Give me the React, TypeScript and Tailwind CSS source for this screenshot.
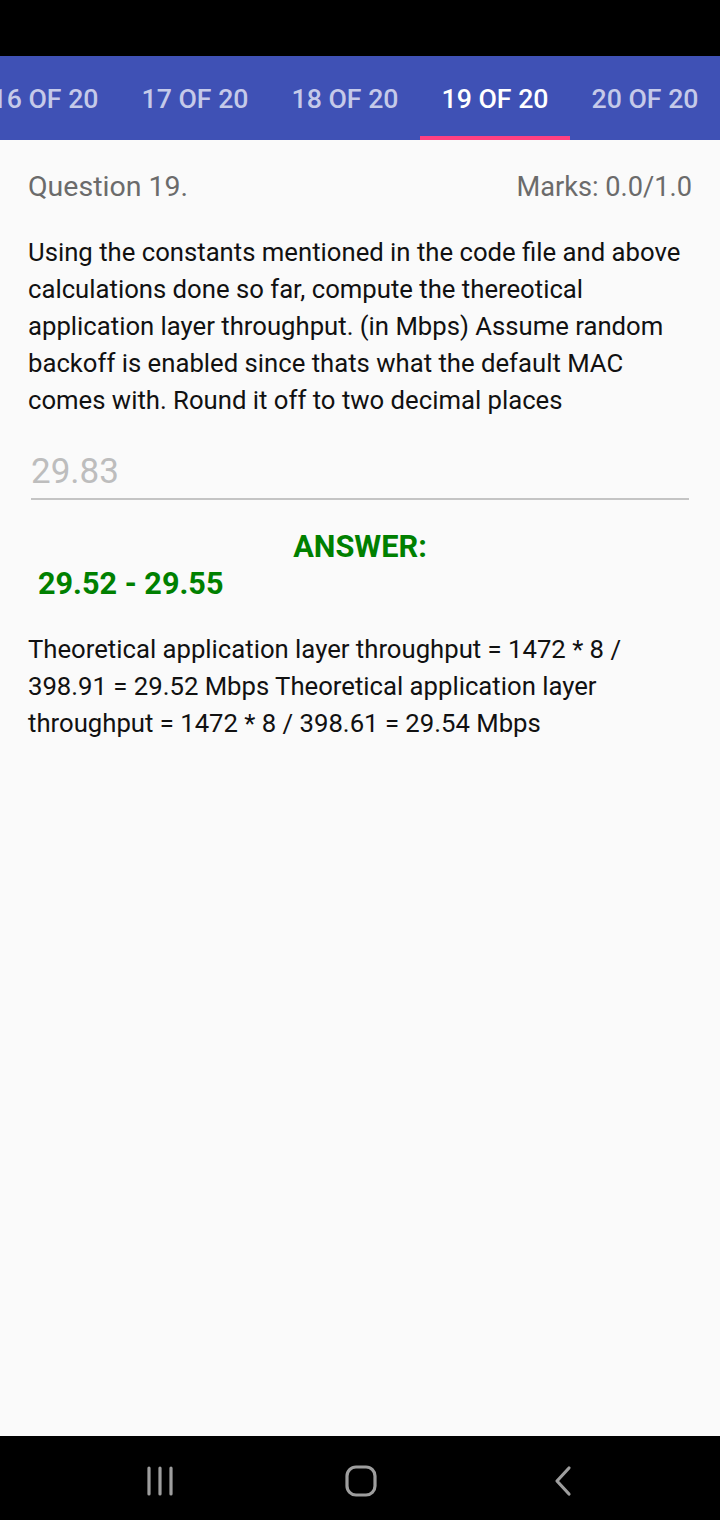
import React from "react";

const tabs = ["16 OF 20", "17 OF 20", "18 OF 20", "19 OF 20", "20 OF 20"];

export default function App() {
  return (
    <div className="w-[720px] h-[1520px] flex flex-col bg-[#fafafa] overflow-hidden" style={{ fontFamily: "Roboto, 'Noto Sans', sans-serif" }}>
      <div className="h-[56px] bg-black shrink-0" />
      <div className="h-[84px] bg-[#3f51b5] shrink-0 flex overflow-hidden">
        <div className="flex ml-[-30px]">
          {tabs.map((t, i) => (
            <div key={t} className="w-[150px] shrink-0 flex flex-col">
              <div className={`flex-1 flex items-center justify-center pt-[6px] text-[26.7px] font-medium ${i === 3 ? "text-white" : "text-[#c5cae9]"}`}>
                {t}
              </div>
              <div className={`h-[4px] ${i === 3 ? "bg-[#ff4081]" : ""}`} />
            </div>
          ))}
        </div>
      </div>
      <div className="flex-1 px-[28px]">
        <div className="flex justify-between items-center pt-[28px] text-[#6b6b6b] leading-[38px]">
          <span className="text-[28.5px]">Question 19.</span>
          <span className="text-[27.2px]">Marks: 0.0/1.0</span>
        </div>
        <p className="mt-[28px] text-[25.7px] leading-[37px] text-[#111]">
          Using the constants mentioned in the code file and above calculations done so far, compute the thereotical application layer throughput. (in Mbps) Assume random backoff is enabled since thats what the default MAC comes with. Round it off to two decimal places
        </p>
        <div className="mx-[3px] mt-[32px] border-b-2 border-[#c4c4c4] pb-[5px] text-[35px] leading-[42px] text-[#bdbdbd]">
          29.83
        </div>
        <div className="mt-[28px] text-center text-[30.7px] font-bold text-[#008000] leading-[38px]">ANSWER:</div>
        <div className="pl-[10px] text-[30.6px] font-bold text-[#008000] leading-[36px]">29.52 - 29.55</div>
        <p className="mt-[29px] text-[25.7px] leading-[37px] text-[#111]">
          Theoretical application layer throughput = 1472 * 8 / 398.91 = 29.52 Mbps Theoretical application layer throughput = 1472 * 8 / 398.61 = 29.54 Mbps
        </p>
      </div>
      <div className="h-[84px] bg-black shrink-0 flex items-center justify-around px-[60px] pt-[6px]">
        <div className="w-[200px] flex justify-center">
          <svg width="30" height="32" viewBox="0 0 30 32">
            <g stroke="#9e9e9e" strokeWidth="3.2" strokeLinecap="round">
              <line x1="4" y1="3" x2="4" y2="29" />
              <line x1="15" y1="3" x2="15" y2="29" />
              <line x1="26" y1="3" x2="26" y2="29" />
            </g>
          </svg>
        </div>
        <div className="w-[200px] flex justify-center pl-[2px]">
          <svg width="32" height="32" viewBox="0 0 32 32">
            <rect x="2" y="2" width="28" height="28" rx="9" fill="none" stroke="#9e9e9e" strokeWidth="3.2" />
          </svg>
        </div>
        <div className="w-[200px] flex justify-center pl-[6px]">
          <svg width="20" height="32" viewBox="0 0 20 32">
            <polyline points="16,3 4,16 16,29" fill="none" stroke="#9e9e9e" strokeWidth="3.2" strokeLinecap="round" strokeLinejoin="round" />
          </svg>
        </div>
      </div>
    </div>
  );
}
